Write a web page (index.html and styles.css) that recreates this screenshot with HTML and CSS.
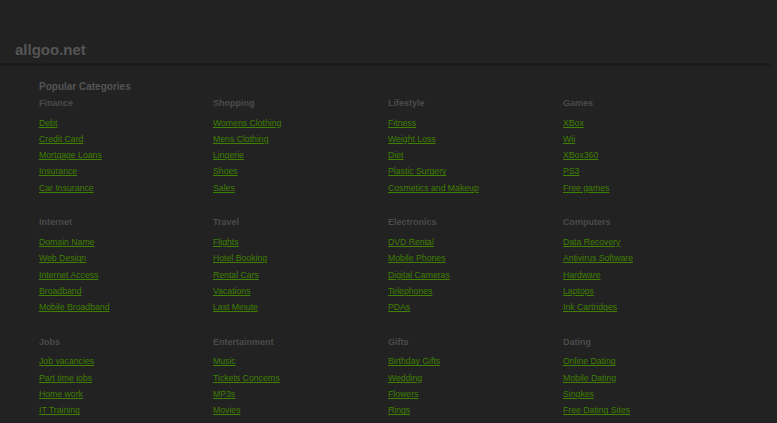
FILE: index.html
```html
<!DOCTYPE html>
<html>
<head>
<meta charset="utf-8">
<title>allgoo.net</title>
<link rel="stylesheet" href="styles.css">
</head>
<body>
<header class="header"><div class="logo">allgoo.net</div></header>
<main class="main">
  <h2 class="title">Popular Categories</h2>
  <div class="grid">
    <section class="cat"><h3>Finance</h3><ul><li><a href="#">Debt</a></li><li><a href="#">Credit Card</a></li><li><a href="#">Mortgage Loans</a></li><li><a href="#">Insurance</a></li><li><a href="#">Car Insurance</a></li></ul></section>
    <section class="cat"><h3>Shopping</h3><ul><li><a href="#">Womens Clothing</a></li><li><a href="#">Mens Clothing</a></li><li><a href="#">Lingerie</a></li><li><a href="#">Shoes</a></li><li><a href="#">Sales</a></li></ul></section>
    <section class="cat"><h3>Lifestyle</h3><ul><li><a href="#">Fitness</a></li><li><a href="#">Weight Loss</a></li><li><a href="#">Diet</a></li><li><a href="#">Plastic Surgery</a></li><li><a href="#">Cosmetics and Makeup</a></li></ul></section>
    <section class="cat"><h3>Games</h3><ul><li><a href="#">XBox</a></li><li><a href="#">Wii</a></li><li><a href="#">XBox360</a></li><li><a href="#">PS3</a></li><li><a href="#">Free games</a></li></ul></section>
    <section class="cat"><h3>Internet</h3><ul><li><a href="#">Domain Name</a></li><li><a href="#">Web Design</a></li><li><a href="#">Internet Access</a></li><li><a href="#">Broadband</a></li><li><a href="#">Mobile Broadband</a></li></ul></section>
    <section class="cat"><h3>Travel</h3><ul><li><a href="#">Flights</a></li><li><a href="#">Hotel Booking</a></li><li><a href="#">Rental Cars</a></li><li><a href="#">Vacations</a></li><li><a href="#">Last Minute</a></li></ul></section>
    <section class="cat"><h3>Electronics</h3><ul><li><a href="#">DVD Rental</a></li><li><a href="#">Mobile Phones</a></li><li><a href="#">Digital Cameras</a></li><li><a href="#">Telephones</a></li><li><a href="#">PDAs</a></li></ul></section>
    <section class="cat"><h3>Computers</h3><ul><li><a href="#">Data Recovery</a></li><li><a href="#">Antivirus Software</a></li><li><a href="#">Hardware</a></li><li><a href="#">Laptops</a></li><li><a href="#">Ink Cartridges</a></li></ul></section>
    <section class="cat"><h3>Jobs</h3><ul><li><a href="#">Job vacancies</a></li><li><a href="#">Part time jobs</a></li><li><a href="#">Home work</a></li><li><a href="#">IT Training</a></li></ul></section>
    <section class="cat"><h3>Entertainment</h3><ul><li><a href="#">Music</a></li><li><a href="#">Tickets Concerns</a></li><li><a href="#">MP3s</a></li><li><a href="#">Movies</a></li></ul></section>
    <section class="cat"><h3>Gifts</h3><ul><li><a href="#">Birthday Gifts</a></li><li><a href="#">Wedding</a></li><li><a href="#">Flowers</a></li><li><a href="#">Rings</a></li></ul></section>
    <section class="cat"><h3>Dating</h3><ul><li><a href="#">Online Dating</a></li><li><a href="#">Mobile Dating</a></li><li><a href="#">Singkes</a></li><li><a href="#">Free Dating Sites</a></li></ul></section>
  </div>
</main>
</body>
</html>
```
FILE: styles.css
```css
html, body {
  margin: 0;
  padding: 0;
  background: #222222;
  font-family: "Liberation Sans", Arial, sans-serif;
  overflow: hidden;
}
.header {
  height: 63px;
  width: 770px;
  border-bottom: 3px solid #1b1b1b;
  box-sizing: content-box;
}
.logo {
  padding: 41px 0 0 15px;
  font-size: 15px;
  line-height: 18px;
  font-weight: bold;
  color: #555555;
}
.main {
  padding: 15px 0 0 39px;
}
.title {
  margin: 0 0 4px;
  font-size: 10px;
  line-height: 12px;
  font-weight: bold;
  color: #545454;
}
.grid {
  display: grid;
  grid-template-columns: 174px 175px 175px 175px;
  row-gap: 20.5px;
}
.cat h3 {
  margin: 0 0 5.5px;
  font-size: 9px;
  line-height: 12px;
  font-weight: bold;
  color: #4b4b4b;
}
.cat ul {
  list-style: none;
  margin: 0;
  padding: 0;
}
.cat li {
  font-size: 8.7px;
  line-height: 16.3px;
}
.cat a {
  color: #3f8000;
  text-decoration: underline;
}
```
